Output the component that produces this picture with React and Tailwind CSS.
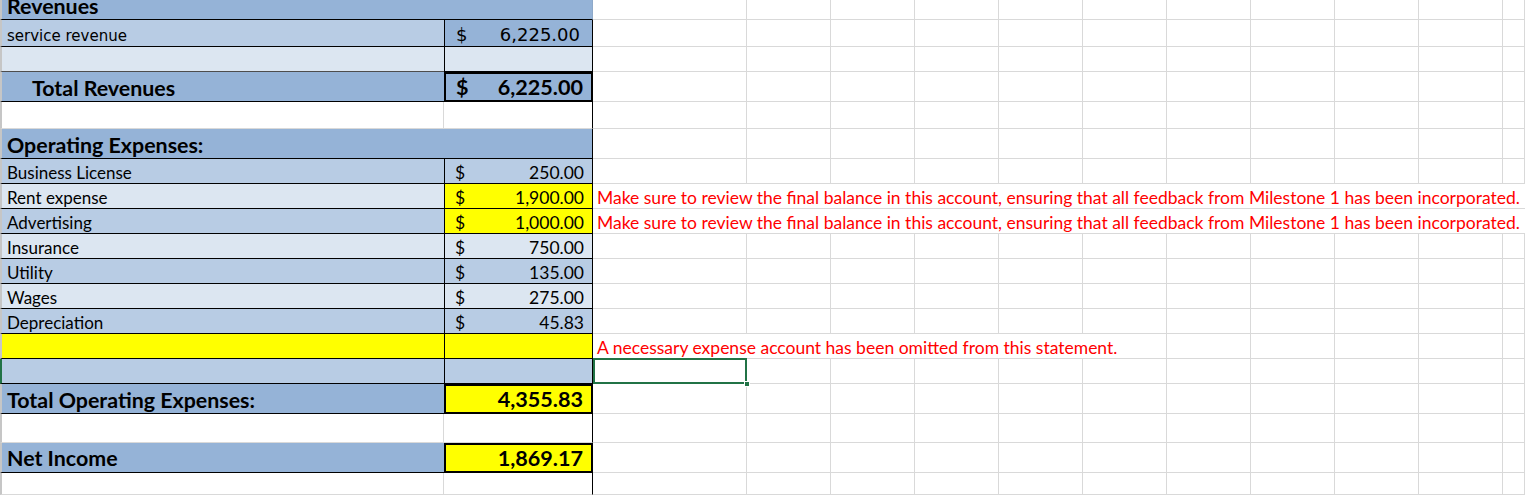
const grid = 'border-r border-b border-[#d9d9d9]';
const extra = [0, 1, 2, 3, 4, 5, 6, 7, 8];

function Rest({ from = 0 }) {
  // empty sheet cells to the right of column B; from = number of columns already drawn after C
  return (
    <>
      {from === 0 && <div className={`w-[154px] shrink-0 ${grid}`} />}
      {extra.slice(from).map((i) => (
        <div key={i} className={`w-[84px] shrink-0 ${grid}`} />
      ))}
      <div className={`flex-1 ${grid}`} />
    </>
  );
}

function Note({ children, span }) {
  return (
    <div
      className={`${span} shrink-0 flex items-end border-b border-[#d9d9d9] pl-[4px] text-[17.5px] leading-[20px] text-[#ff0000] whitespace-nowrap overflow-visible`}
    >
      {children}
    </div>
  );
}

function Label({ children, bg, bold, indent, edge = 'border-l-[#c6c6c6]', pb = 'pb-0' }) {
  return (
    <div
      className={`w-[444px] shrink-0 flex items-end border-l-2 ${edge} border-b border-b-black ${bg} ${pb} ${
        indent ? 'pl-[30px]' : 'pl-[5px]'
      } ${bold ? 'text-[21.4px] leading-[24px] font-bold' : 'text-[17px] leading-[20px]'} whitespace-nowrap`}
    >
      {children}
    </div>
  );
}

function Money({ value, dollar = true, bg, bold, thick }) {
  return (
    <div
      className={`w-[149px] shrink-0 flex items-end justify-between ${
        thick ? 'border-2 pb-[1px]' : 'border-l border-r border-b'
      } border-black ${bg} pl-[10px] pr-[8px] ${
        bold ? 'text-[21.6px] leading-[24px] font-bold' : 'text-[17.5px] leading-[20px]'
      }`}
    >
      <span>{dollar ? '$' : ''}</span>
      <span>{value}</span>
    </div>
  );
}

const expenses = [
  { name: 'Business License', value: '250.00', bg: 'bg-[#b8cce4]' },
  { name: 'Rent expense', value: '1,900.00', bg: 'bg-[#dce6f1]', flag: true },
  { name: 'Advertising', value: '1,000.00', bg: 'bg-[#b8cce4]', flag: true },
  { name: 'Insurance', value: '750.00', bg: 'bg-[#dce6f1]' },
  { name: 'Utility', value: '135.00', bg: 'bg-[#b8cce4]' },
  { name: 'Wages', value: '275.00', bg: 'bg-[#dce6f1]' },
  { name: 'Depreciation', value: '45.83', bg: 'bg-[#b8cce4]' },
];

const feedback =
  'Make sure to review the final balance in this account, ensuring that all feedback from Milestone 1 has been incorporated.';

export default function App() {
  return (
    <div className="w-[1525px] h-[495px] overflow-hidden bg-white text-black font-[Lato,sans-serif]">
      {/* Revenues header, cut at the top */}
      <div className="flex h-[20px]">
        <div className="w-[593px] shrink-0 overflow-hidden bg-[#95b3d7] border-l-2 border-l-[#c6c6c6] border-b border-b-black border-r border-r-[#8ea9c9]">
          <div className="mt-[-6px] pl-[5px] text-[21.4px] leading-[24px] font-bold">Revenues</div>
        </div>
        <Rest />
      </div>

      {/* service revenue */}
      <div className="flex h-[27px]">
        <div className="w-[444px] shrink-0 flex items-end border-l-2 border-l-[#c6c6c6] border-b border-b-black bg-[#b8cce4] pl-[5px] font-['DejaVu_Sans',sans-serif] text-[15px] leading-[20px]">
          service revenue
        </div>
        <div className="w-[149px] shrink-0 flex items-end justify-between border-l border-r border-b border-black bg-[#95b3d7] pl-[11px] pr-[12px] font-['DejaVu_Sans',sans-serif] text-[18px] leading-[22px]">
          <span>$</span>
          <span>6,225.00</span>
        </div>
        <Rest />
      </div>

      {/* blank */}
      <div className="flex h-[25px]">
        <div className="w-[444px] shrink-0 border-l-2 border-l-[#c6c6c6] border-b border-b-[#4d4d4d] bg-[#dce6f1]" />
        <div className="w-[149px] shrink-0 border-l border-r border-b border-black bg-[#dce6f1]" />
        <Rest />
      </div>

      {/* Total Revenues */}
      <div className="flex h-[30px]">
        <Label bg="bg-[#95b3d7]" bold indent pb="pb-[1px]">
          Total Revenues
        </Label>
        <Money value="6,225.00" bg="bg-[#95b3d7]" bold thick />
        <Rest />
      </div>

      {/* spacer */}
      <div className="flex h-[27px]">
        <div className="w-[444px] shrink-0 border-l-2 border-l-[#c6c6c6] border-r border-r-[#d9d9d9] border-b border-b-[#d9d9d9]" />
        <div className="w-[149px] shrink-0 border-r border-r-black border-b border-b-[#d9d9d9]" />
        <Rest />
      </div>

      {/* Operating Expenses header */}
      <div className="flex h-[30px]">
        <div className="w-[593px] shrink-0 flex items-end bg-[#95b3d7] border-l-2 border-l-[#c6c6c6] border-b border-b-black border-r border-r-black pl-[5px] pb-[1px] text-[21.4px] leading-[24px] font-bold">
          Operating Expenses:
        </div>
        <Rest />
      </div>

      {expenses.map((e) => (
        <div key={e.name} className="flex h-[25px]">
          <Label bg={e.bg}>{e.name}</Label>
          <Money value={e.value} bg={e.flag ? 'bg-[#ffff00]' : e.bg} />
          {e.flag ? <Note span="flex-1">{feedback}</Note> : <Rest />}
        </div>
      ))}

      {/* missing expense line */}
      <div className="flex h-[25px]">
        <Label bg="bg-[#ffff00]" />
        <div className="w-[149px] shrink-0 border-l border-r border-b border-black bg-[#ffff00]" />
        <Note span="w-[574px] border-r">A necessary expense account has been omitted from this statement.</Note>
        <Rest from={5} />
      </div>

      {/* blank blue row with selected cell */}
      <div className="flex h-[25px]">
        <Label bg="bg-[#b8cce4]" edge="border-l-[#217346]" />
        <div className="w-[149px] shrink-0 border-l border-r border-b border-black bg-[#b8cce4]" />
        <div className={`relative w-[154px] shrink-0 ${grid}`}>
          <div className="absolute -top-px left-0 right-[-1px] bottom-[-1px] border-2 border-[#217346]" />
          <div className="absolute right-[-4px] bottom-[-4px] w-[6px] h-[6px] bg-[#217346] border border-white" />
        </div>
        <Rest from={0.5} />
      </div>

      {/* Total Operating Expenses */}
      <div className="flex h-[30px]">
        <Label bg="bg-[#95b3d7]" bold pb="pb-[1px]">
          Total Operating Expenses:
        </Label>
        <Money value="4,355.83" dollar={false} bg="bg-[#ffff00]" bold thick />
        <Rest />
      </div>

      {/* spacer */}
      <div className="flex h-[29px]">
        <div className="w-[444px] shrink-0 border-l-2 border-l-[#c6c6c6] border-r border-r-[#d9d9d9] border-b border-b-[#d9d9d9]" />
        <div className="w-[149px] shrink-0 border-r border-r-black border-b border-b-[#d9d9d9]" />
        <Rest />
      </div>

      {/* Net Income */}
      <div className="flex h-[30px]">
        <Label bg="bg-[#95b3d7]" bold pb="pb-[2px]">
          Net Income
        </Label>
        <Money value="1,869.17" dollar={false} bg="bg-[#ffff00]" bold thick />
        <Rest />
      </div>

      <div className="flex h-[22px]">
        <div className="w-[444px] shrink-0 border-l-2 border-l-[#c6c6c6] border-r border-r-[#d9d9d9] border-b border-b-[#d9d9d9]" />
        <div className="w-[149px] shrink-0 border-r border-r-black border-b border-b-[#d9d9d9]" />
        <Rest />
      </div>
    </div>
  );
}
